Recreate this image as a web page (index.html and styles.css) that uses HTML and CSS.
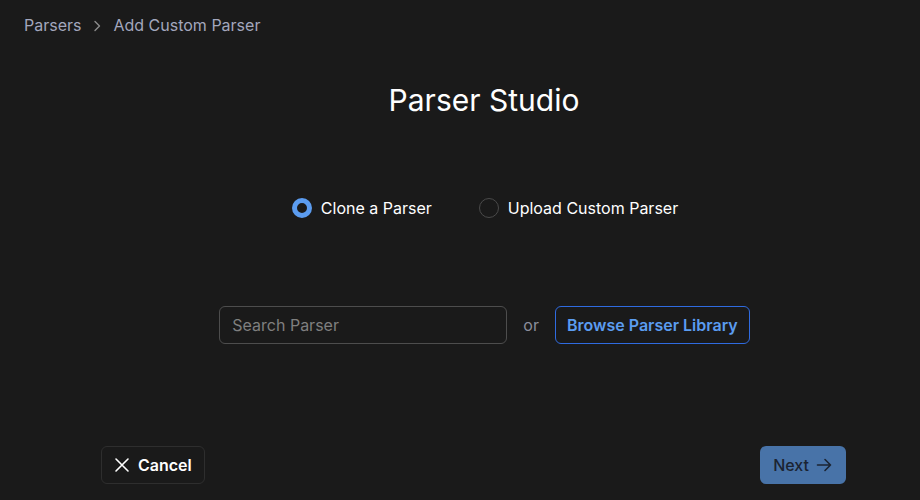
FILE: index.html
```html
<!DOCTYPE html>
<html lang="en">
<head>
    <meta charset="UTF-8">
    <meta name="viewport" content="width=device-width, initial-scale=1.0">
    <title>Parser Studio</title>
    <link rel="stylesheet" href="styles.css">
</head>
<body>
    <div class="page">
        <!-- Breadcrumb trail -->
        <nav class="breadcrumb">
            <a href="#" class="crumb">Parsers</a>
            <svg class="crumb-sep" width="16" height="16" viewBox="0 0 16 16" fill="none">
                <path d="M6 3.5l4.5 4.5L6 12.5" stroke="#8b8b8b" stroke-width="1.4" stroke-linecap="round" stroke-linejoin="round"/>
            </svg>
            <span class="crumb current">Add Custom Parser</span>
        </nav>

        <main class="studio">
            <h1 class="studio-title">Parser Studio</h1>

            <div class="mode-options">
                <label class="radio-option">
                    <input type="radio" name="mode" checked>
                    <span class="radio-dot"></span>
                    Clone a Parser
                </label>
                <label class="radio-option">
                    <input type="radio" name="mode">
                    <span class="radio-dot"></span>
                    Upload Custom Parser
                </label>
            </div>

            <div class="search-row">
                <input class="search-input" type="text" placeholder="Search Parser">
                <span class="or-text">or</span>
                <button class="browse-btn">Browse Parser Library</button>
            </div>
        </main>

        <!-- Wizard actions -->
        <footer class="actions">
            <button class="cancel-btn">
                <svg width="16" height="16" viewBox="0 0 16 16" fill="none">
                    <path d="M2 2l12 12M14 2L2 14" stroke="#ffffff" stroke-width="1.6" stroke-linecap="round"/>
                </svg>
                Cancel
            </button>
            <button class="next-btn">
                Next
                <svg width="18" height="18" viewBox="0 0 18 18" fill="none">
                    <path d="M2.5 9h13M10 3.5L15.5 9 10 14.5" stroke="#1b2432" stroke-width="1.6" stroke-linecap="round" stroke-linejoin="round"/>
                </svg>
            </button>
        </footer>
    </div>
</body>
</html>
```

FILE: styles.css
```css
body, html {
    margin: 0;
    padding: 0;
    height: 100%;
    background-color: #1a1a1a;
    color: #ffffff;
    font-family: Inter, "Noto Sans", sans-serif;
    overflow: hidden;
}

.page {
    height: 100vh;
    display: flex;
    flex-direction: column;
}

/* Breadcrumb */
.breadcrumb {
    display: flex;
    align-items: center;
    gap: 8px;
    padding: 13px 24px;
    font-size: 16px;
    line-height: 24px;
}

.crumb {
    color: #a3a7bd;
    text-decoration: none;
}

.crumb-sep {
    margin-top: 1px;
}

/* Main area */
.studio {
    flex: 1;
    display: flex;
    flex-direction: column;
    align-items: center;
    padding-left: 48px;
}

.studio-title {
    margin: 31px 0 0;
    font-size: 30px;
    line-height: 38px;
    font-weight: 400;
}

.mode-options {
    display: flex;
    gap: 47px;
    margin-top: 77px;
    padding-left: 2px;
}

.radio-option {
    display: flex;
    align-items: center;
    gap: 9px;
    font-size: 16px;
    line-height: 24px;
    cursor: pointer;
}

.radio-option input {
    display: none;
}

.radio-dot {
    width: 20px;
    height: 20px;
    box-sizing: border-box;
    border-radius: 50%;
    border: 1.5px solid #4a4a4a;
}

.radio-option input:checked + .radio-dot {
    border: 5px solid #5b9cf0;
}

.search-row {
    display: flex;
    align-items: center;
    margin-top: 86px;
    padding-left: 1px;
}

.search-input {
    width: 288px;
    height: 38px;
    box-sizing: border-box;
    padding: 0 12px;
    background: transparent;
    border: 1px solid #4d4d4d;
    border-radius: 6px;
    color: #ffffff;
    font-family: inherit;
    font-size: 16px;
}

.search-input::placeholder {
    color: #7f7f7f;
}

.or-text {
    margin: 0 16px;
    color: #8b8e9c;
    font-size: 16px;
}

.browse-btn {
    height: 38px;
    padding: 0 11px;
    background: transparent;
    border: 1px solid #2f6be0;
    border-radius: 6px;
    color: #5b9cf0;
    font-family: inherit;
    font-size: 16px;
    font-weight: 600;
    cursor: pointer;
}

/* Footer buttons */
.actions {
    display: flex;
    justify-content: space-between;
    padding: 0 74px 16px 101px;
}

.cancel-btn,
.next-btn {
    display: flex;
    align-items: center;
    height: 38px;
    border-radius: 6px;
    font-family: inherit;
    font-size: 16px;
    cursor: pointer;
}

.cancel-btn {
    gap: 8px;
    padding: 0 12px 0 12px;
    background: transparent;
    border: 1px solid #2e2e2e;
    color: #ffffff;
    font-weight: 600;
}

.next-btn {
    gap: 6px;
    padding: 0 13px 0 13px;
    background: #4873a8;
    border: none;
    color: #1b2432;
    font-weight: 500;
}
```
